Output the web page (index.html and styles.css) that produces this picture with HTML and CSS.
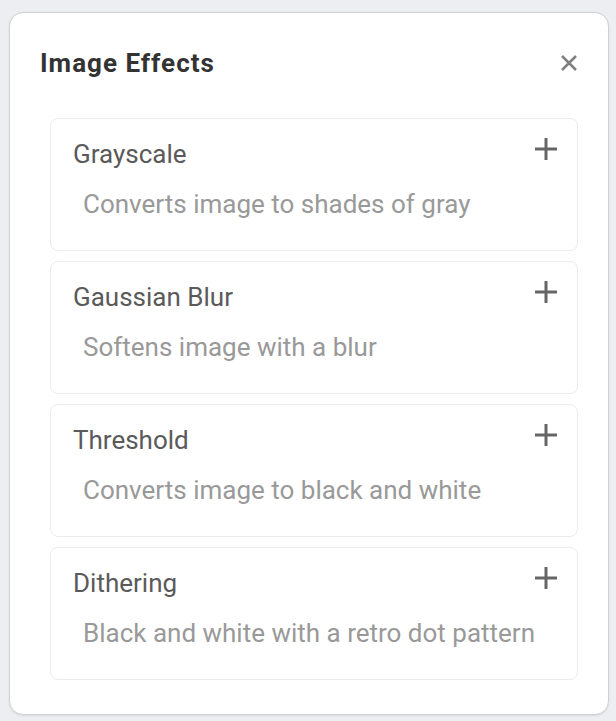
FILE: index.html
```html
<!DOCTYPE html>
<html>
<head>
<meta charset="utf-8">
<link rel="stylesheet" href="styles.css">
</head>
<body>
<div class="panel">
  <div class="header">
    <h1 class="title">Image Effects</h1>
    <button class="close" aria-label="Close">
      <svg width="18" height="18" viewBox="0 0 18 18"><path d="M2 2L16 16M16 2L2 16" stroke="#808080" stroke-width="2.6" stroke-linecap="butt"/></svg>
    </button>
  </div>
  <div class="list">
    <div class="card">
      <div class="card-head"><span class="card-title">Grayscale</span><span class="plus"><svg width="22" height="22" viewBox="0 0 22 22"><path d="M11 0V22M0 11H22" stroke="#666" stroke-width="3"/></svg></span></div>
      <div class="card-desc">Converts image to shades of gray</div>
    </div>
    <div class="card">
      <div class="card-head"><span class="card-title">Gaussian Blur</span><span class="plus"><svg width="22" height="22" viewBox="0 0 22 22"><path d="M11 0V22M0 11H22" stroke="#666" stroke-width="3"/></svg></span></div>
      <div class="card-desc">Softens image with a blur</div>
    </div>
    <div class="card">
      <div class="card-head"><span class="card-title">Threshold</span><span class="plus"><svg width="22" height="22" viewBox="0 0 22 22"><path d="M11 0V22M0 11H22" stroke="#666" stroke-width="3"/></svg></span></div>
      <div class="card-desc">Converts image to black and white</div>
    </div>
    <div class="card">
      <div class="card-head"><span class="card-title">Dithering</span><span class="plus"><svg width="22" height="22" viewBox="0 0 22 22"><path d="M11 0V22M0 11H22" stroke="#666" stroke-width="3"/></svg></span></div>
      <div class="card-desc">Black and white with a retro dot pattern</div>
    </div>
  </div>
</div>
</body>
</html>
```

FILE: styles.css
```css
html, body {
  margin: 0;
  padding: 0;
}
body {
  background: #eceef2;
  font-family: Roboto, "Liberation Sans", sans-serif;
  padding: 12px 7px 6px 9px;
}
.panel {
  width: 600px;
  height: 703px;
  box-sizing: border-box;
  background: #fff;
  border: 1px solid #cfd0d3;
  border-radius: 14px;
  box-shadow: 0 1px 2px rgba(0,0,0,0.08);
  padding: 0 30px 0 30px;
}
.header {
  display: flex;
  justify-content: space-between;
  align-items: flex-start;
  height: 105px;
  box-sizing: border-box;
  padding-top: 35px;
}
.title {
  margin: 0;
  font-size: 26px;
  line-height: 30px;
  font-weight: 700;
  color: #333;
  letter-spacing: 1px;
}
.close {
  background: none;
  border: 0;
  padding: 0;
  width: 18px;
  height: 18px;
  margin-top: 6px;
  display: block;
}
.close svg { display: block; }
.list {
  display: flex;
  flex-direction: column;
  gap: 10px;
  margin-left: 10px;
}
.card {
  height: 133px;
  box-sizing: border-box;
  border: 1.5px solid #ececec;
  border-radius: 8px;
  padding: 19px 20px 0 22px;
}
.card-head {
  display: flex;
  justify-content: space-between;
  align-items: flex-start;
}
.card-title {
  font-size: 26px;
  color: #5a5a5a;
  line-height: 30px;
  margin-top: 1px;
}
.plus {
  display: block;
  width: 22px;
  height: 22px;
  margin-top: 0;
}
.plus svg { display: block; }
.card-desc {
  font-size: 26px;
  color: #999;
  margin-left: 10px;
  margin-top: 20px;
  line-height: 30px;
}
```
